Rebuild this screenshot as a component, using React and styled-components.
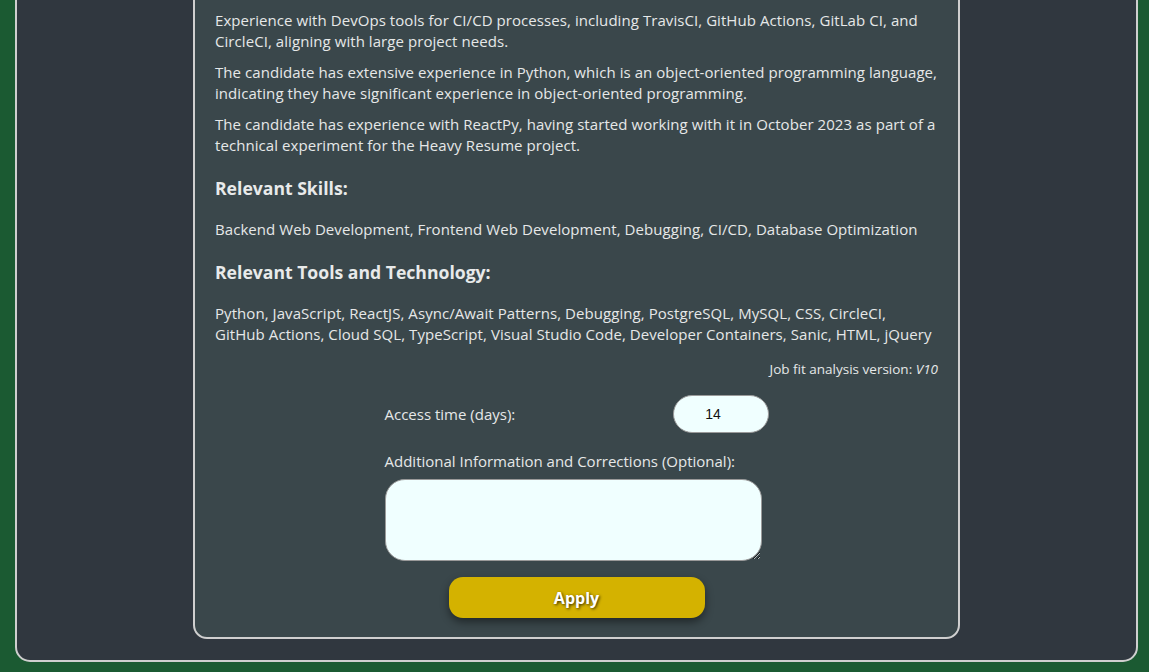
import React from "react";
import styled, { createGlobalStyle } from "styled-components";

const GlobalStyle = createGlobalStyle`
  html, body {
    margin: 0;
    padding: 0;
    background: #1b5a32;
    overflow: hidden;
  }
  body {
    font-family: "Open Sans", "Noto Sans", sans-serif;
  }
`;

const Viewport = styled.div`
  height: 100vh;
  display: flex;
  flex-direction: column;
  justify-content: flex-end;
  overflow: hidden;
`;

const OuterPanel = styled.div`
  flex: none;
  margin: 0 11px 10px 15px;
  border: 2px solid #cfcfcf;
  border-radius: 15px;
  background: #30373f;
  padding: 40px 176px 21px;
`;

const Card = styled.section`
  border: 2px solid #cfcfcf;
  border-radius: 14px;
  background: #3a474b;
  padding: 20px 20px 19px;
  color: #e6e8e8;
  font-size: 15px;
  line-height: 21px;
`;

const Heading = styled.h3`
  font-size: 17.6px;
  line-height: 24px;
  font-weight: 700;
  margin: 19.5px 0;
  color: #e8eaea;
`;

const Para = styled.p`
  margin: 10px 0;
  letter-spacing: 0.065px;
`;

const Version = styled.div`
  margin-top: 15px;
  text-align: right;
  font-size: 13.5px;
  line-height: 19px;
  em {
    font-style: italic;
  }
`;

const Form = styled.div`
  width: 384px;
  margin: 16px auto 0;
`;

const Row = styled.div`
  display: flex;
  align-items: center;
  justify-content: space-between;
`;

const Label = styled.label`
  display: block;
`;

const FieldLabel = styled(Label)`
  margin: 18px 0 7px;
`;

const NumberInput = styled.input`
  box-sizing: border-box;
  width: 96px;
  height: 38px;
  border: 1px solid #9a9a9a;
  border-radius: 19px;
  background: #f0ffff;
  text-align: center;
  font-family: "Liberation Sans", Arial, sans-serif;
  font-size: 14px;
  color: #111;
  padding: 1px 2px;
  outline: none;
`;

const TextArea = styled.textarea`
  display: block;
  box-sizing: border-box;
  width: 377px;
  height: 82px;
  border: 1px solid #9a9a9a;
  border-radius: 20px;
  background: #f0ffff;
  outline: none;
  padding: 4px 10px;
  font-family: "Open Sans", sans-serif;
`;

const ApplyButton = styled.button`
  display: block;
  width: 256px;
  height: 41px;
  margin: 16px auto 0;
  border: none;
  border-radius: 14px;
  background: #d4b200;
  color: #ffffff;
  font-family: "Open Sans", sans-serif;
  font-size: 16px;
  font-weight: 700;
  text-shadow: 1px 1px 3px rgba(0, 0, 0, 0.75);
  box-shadow: 0 4px 8px rgba(0, 0, 0, 0.45);
  cursor: pointer;
`;

export default function App() {
  return (
    <>
      <GlobalStyle />
      <Viewport>
        <OuterPanel>
          <Card>
            <Para>
              Experience with DevOps tools for CI/CD processes, including TravisCI, GitHub Actions, GitLab CI, and
              CircleCI, aligning with large project needs.
            </Para>
            <Para>
              The candidate has extensive experience in Python, which is an object-oriented programming language,
              indicating they have significant experience in object-oriented programming.
            </Para>
            <Para>
              The candidate has experience with ReactPy, having started working with it in October 2023 as part of a
              technical experiment for the Heavy Resume project.
            </Para>
            <Heading>Relevant Skills:</Heading>
            <Para>
              Backend Web Development, Frontend Web Development, Debugging, CI/CD, Database Optimization
            </Para>
            <Heading>Relevant Tools and Technology:</Heading>
            <Para>
              Python, JavaScript, ReactJS, Async/Await Patterns, Debugging, PostgreSQL, MySQL, CSS, CircleCI,
              GitHub Actions, Cloud SQL, TypeScript, Visual Studio Code, Developer Containers, Sanic, HTML, jQuery
            </Para>
            <Version>
              Job fit analysis version: <em>V10</em>
            </Version>
            <Form>
              <Row>
                <Label htmlFor="access-days">Access time (days):</Label>
                <NumberInput id="access-days" type="number" defaultValue={14} />
              </Row>
              <FieldLabel htmlFor="extra-info">Additional Information and Corrections (Optional):</FieldLabel>
              <TextArea id="extra-info" />
              <ApplyButton type="button">Apply</ApplyButton>
            </Form>
          </Card>
        </OuterPanel>
      </Viewport>
    </>
  );
}
